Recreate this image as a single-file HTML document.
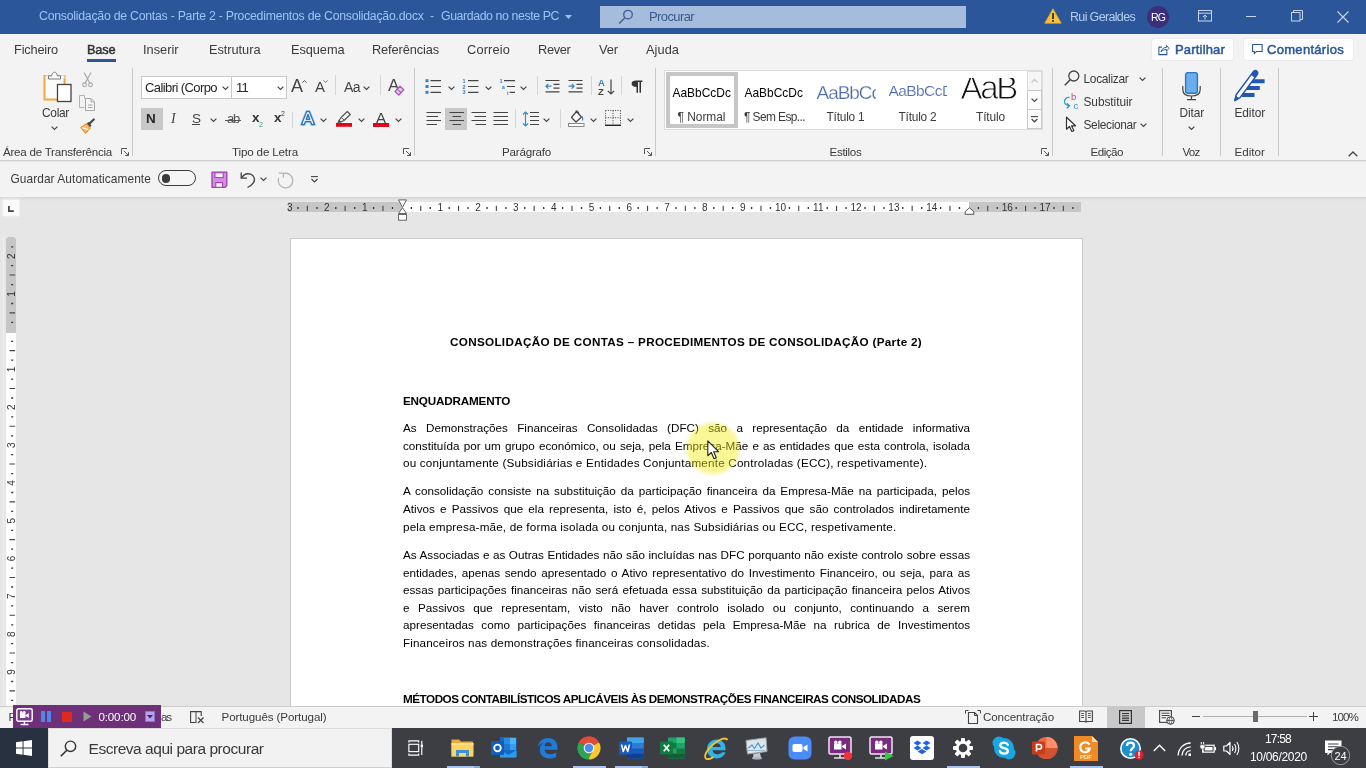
<!DOCTYPE html>
<html lang="pt"><head>
<meta charset="utf-8">
<title>Word</title>
<style>
*{box-sizing:border-box;margin:0;padding:0}
html,body{width:1366px;height:768px;overflow:hidden;background:#e6e6e6;font-family:"Liberation Sans",sans-serif;color:#444}
body{will-change:transform;position:relative}
.t{position:absolute;white-space:nowrap;line-height:1;color:#3b3b3b;transform-origin:0 0;font-size:12px}
.b{font-weight:bold}
svg{position:absolute;overflow:visible}
.bx{position:absolute}
/* title bar */
#titlebar{position:absolute;left:0;top:0;width:1366px;height:34px;background:#2b579a}
#search{position:absolute;left:600px;top:6px;width:366px;height:22px;background:#a6bcdc}
/* ribbon */
#tabs{position:absolute;left:0;top:34px;width:1366px;height:29px;background:#f3f3f3}
#ribbon{position:absolute;left:0;top:63px;width:1366px;height:98px;background:#f3f3f3;border-bottom:1px solid #d0d0d0}
#qat{position:absolute;left:0;top:161px;width:1366px;height:36px;background:#f3f3f3;border-top:1px solid #e4e4e4}
.sep{position:absolute;width:1px;background:#c9c9c9}
.sep2{position:absolute;width:1px;background:#d6d6d6}
/* doc */
#docarea{position:absolute;left:0;top:197px;width:1366px;height:509px;background:#e6e6e6}
#page{position:absolute;left:291px;top:239px;width:791px;height:467px;background:#fff;box-shadow:0 0 0 1px #cbcbcb}
.ln{position:absolute;left:403px;width:567px;font-size:11.700px;line-height:18px;height:18px;color:#000;text-align:justify;text-align-last:justify;white-space:nowrap}
.lb{position:absolute;left:403px;font-size:11.700px;line-height:18px;height:18px;color:#000;white-space:nowrap;transform-origin:0 0}
/* status */
#status{position:absolute;left:0;top:706px;width:1366px;height:22px;background:#f3f3f3;border-top:1px solid #cdcdcd}
/* taskbar */
#taskbar{position:absolute;left:0;top:728px;width:1366px;height:40px;background:#3c3e44}
#start{position:absolute;left:0;top:0;width:48px;height:40px;background:#273140}
#tsearch{position:absolute;left:48px;top:0;width:344px;height:40px;background:#f2f2f2;border:1px solid #dcdcdc;border-bottom-color:#cfcfcf}
.ul{position:absolute;top:38px;height:2px;background:#a9c3ee}
</style>
</head>
<body>
<!-- ================= TITLE BAR ================= -->
<div id="titlebar">
  <div class="t" style="left: 39px; top: 9.5px; font-size: 12.3px; color: rgb(156, 195, 246); letter-spacing: -0.25px;">Consolidação de Contas - Parte 2 - Procedimentos de Consolidação.docx</div>
  <div class="t" style="left:430px;top:9.500px;font-size:12.300px;color:#9cc3f6">-</div>
  <div class="t" style="left: 441px; top: 9.5px; font-size: 12.3px; color: rgb(156, 195, 246); letter-spacing: -0.39px;">Guardado no neste PC</div>
  <svg style="left:565px;top:15px" width="8" height="5" viewBox="0 0 8 5"><path d="M0 0h7l-3.5 4z" fill="#9cc3f6"></path></svg>
  <div id="search"></div>
  <svg style="left:618px;top:9px" width="16" height="16" viewBox="0 0 16 16"><circle cx="10" cy="5.6" r="4.3" fill="none" stroke="#3f5f93" stroke-width="1.3"></circle><path d="M6.9 8.7L1.2 14.4" stroke="#3f5f93" stroke-width="1.4"></path></svg>
  <div class="t" style="left: 649px; top: 10px; font-size: 13px; color: rgb(58, 90, 142); letter-spacing: -0.61px;">Procurar</div>
  <!-- warning -->
  <svg style="left:1044px;top:8px" width="18" height="16" viewBox="0 0 18 16"><path d="M9 .8L17.2 15.2H.8z" fill="#f9c23c" stroke="#e9a321" stroke-width=".8" stroke-linejoin="round"></path><rect x="8.1" y="5" width="1.9" height="6" fill="#3a3a3a"></rect><rect x="8.1" y="12" width="1.9" height="1.9" fill="#3a3a3a"></rect></svg>
  <div class="t" style="left: 1070px; top: 11px; font-size: 12.5px; color: rgb(180, 205, 240); letter-spacing: -0.66px;">Rui Geraldes</div>
  <div class="bx" style="left:1147px;top:6px;width:22px;height:22px;border-radius:11px;background:#3d2e7c"></div>
  <div class="t" style="left: 1151px; top: 12px; font-size: 10.5px; color: rgb(255, 255, 255); letter-spacing: -0.88px;">RG</div>
  <!-- ribbon display -->
  <svg style="left:1198px;top:10px" width="14" height="12" viewBox="0 0 14 12"><rect x=".5" y=".5" width="13" height="10.5" fill="none" stroke="#c7d6ee" stroke-width="1"></rect><path d="M.5 3.2h13" stroke="#c7d6ee"></path><path d="M7 9.5V5.2M5 7l2-2 2 2" fill="none" stroke="#c7d6ee" stroke-width="1"></path></svg>
  <!-- min -->
  <div class="bx" style="left:1246px;top:16px;width:10px;height:1px;background:#c7d6ee"></div>
  <!-- restore -->
  <svg style="left:1291px;top:10px" width="12" height="12" viewBox="0 0 12 12"><rect x=".5" y="2.5" width="8.5" height="8.5" fill="none" stroke="#c7d6ee"></rect><path d="M2.5 2.5V.5h9v9h-2.4" fill="none" stroke="#c7d6ee"></path></svg>
  <!-- close -->
  <svg style="left:1337px;top:11px" width="12" height="12" viewBox="0 0 12 12"><path d="M.5.5l11 11M11.500.5l-11 11" stroke="#c7d6ee" stroke-width="1.1"></path></svg>
</div>

<!-- ================= TABS ================= -->
<div id="tabs">
  <div class="t" style="left: 14px; top: 10px; font-size: 12.8px; letter-spacing: -0.19px;">Ficheiro</div>
  <div class="t" style="left: 87px; top: 10px; font-size: 12.8px; color: rgb(51, 51, 51); -webkit-text-stroke: 0.45px rgb(51, 51, 51); letter-spacing: -0.17px;">Base</div>
  <div class="bx" style="left:87px;top:25px;width:29px;height:3px;background:#2b579a"></div>
  <div class="t" style="left: 143px; top: 10px; font-size: 12.8px; letter-spacing: -0.01px;">Inserir</div>
  <div class="t" style="left: 209px; top: 10px; font-size: 12.8px; letter-spacing: -0.05px;">Estrutura</div>
  <div class="t" style="left: 291px; top: 10px; font-size: 12.8px; letter-spacing: -0.08px;">Esquema</div>
  <div class="t" style="left: 372px; top: 10px; font-size: 12.8px; letter-spacing: -0.12px;">Referências</div>
  <div class="t" style="left: 467px; top: 10px; font-size: 12.8px; letter-spacing: 0.15px;">Correio</div>
  <div class="t" style="left: 538px; top: 10px; font-size: 12.8px; letter-spacing: -0.33px;">Rever</div>
  <div class="t" style="left: 599px; top: 10px; font-size: 12.8px; letter-spacing: -0.07px;">Ver</div>
  <div class="t" style="left: 646px; top: 10px; font-size: 12.8px; letter-spacing: 0.05px;">Ajuda</div>
  <!-- Partilhar / Comentarios -->
  <div class="bx" style="left:1152px;top:5px;width:81px;height:21px;background:#fff;border-radius:3px;box-shadow:0 0 0 1px #ececec"></div>
  <svg style="left:1158px;top:9.500px" width="11.500" height="11.500" viewBox="0 0 13 13"><path d="M4.5 3.500H1v8.500h9V8.500" fill="none" stroke="#2b579a" stroke-width="1.2"></path><path d="M3.500 9c.5-3 2.500-5 6-5.200V1.500L12.500 5 9.500 8.200V6.200C7 6.200 5 7 3.500 9z" fill="none" stroke="#2b579a" stroke-width="1.100" stroke-linejoin="round"></path></svg>
  <div class="t" style="left: 1175px; top: 9px; font-size: 13px; color: rgb(43, 87, 154); -webkit-text-stroke: 0.5px rgb(43, 87, 154); letter-spacing: 0.18px;">Partilhar</div>
  <div class="bx" style="left:1244px;top:5px;width:109px;height:21px;background:#fff;border-radius:3px;box-shadow:0 0 0 1px #ececec"></div>
  <svg style="left:1252px;top:10px" width="11" height="11" viewBox="0 0 12 12"><path d="M.6.6h10.500v7.500H5L2.500 10.600V8.100H.6z" fill="none" stroke="#2b579a" stroke-width="1.200" stroke-linejoin="round"></path></svg>
  <div class="t" style="left: 1267px; top: 9px; font-size: 13px; color: rgb(43, 87, 154); -webkit-text-stroke: 0.5px rgb(43, 87, 154); letter-spacing: 0.3px;">Comentários</div>
</div>

<!-- ================= RIBBON ================= -->
<div id="ribbon"></div>
<svg width="0" height="0" style="left:-10px;top:-10px">
  <defs>
    <path id="chv" d="M.6.6L3.500 3.400 6.400.6" fill="none" stroke="#444" stroke-width="1.200"></path>
    <g id="dl" fill="none" stroke="#555" stroke-width="1"><path d="M.5 6V.5H6"></path><path d="M3 3l4.500 4.500M7.500 4.200v3.300H4.200"></path></g>
  </defs>
</svg>

<!-- Clipboard group -->
<svg style="left:43px;top:71px" width="30" height="32" viewBox="0 0 30 32">
  <rect x="1.500" y="5" width="20" height="23.500" fill="#fbfbfb" stroke="#f0a741" stroke-width="2"></rect>
  <rect x="2.500" y="4.500" width="19" height="3" fill="#f3f3f3"></rect>
  <path d="M5.500 8V4.800h3.200C9 2.500 10 1.200 11.500 1.200S14 2.500 14.300 4.800h3.200V8z" fill="#fafafa" stroke="#7a7a7a" stroke-width="1"></path>
  <rect x="14.500" y="13.500" width="13.500" height="17" fill="#fff" stroke="#444" stroke-width="1.300"></rect>
</svg>
<div class="t" style="left: 42px; top: 107.5px; font-size: 11.9px; letter-spacing: -0.28px;">Colar</div>
<svg style="left:51px;top:126px" width="7" height="4" viewBox="0 0 7 4"><use href="#chv"></use></svg>
<!-- scissors (grey) -->
<svg style="left:82px;top:72px" width="11" height="16" viewBox="0 0 11 16"><path d="M2 .5L7.800 11M9 .5L3.200 11" stroke="#a8a8a8" stroke-width="1.200" fill="none"></path><circle cx="2.500" cy="12.800" r="1.900" fill="none" stroke="#a8a8a8" stroke-width="1.100"></circle><circle cx="8.500" cy="12.800" r="1.900" fill="none" stroke="#a8a8a8" stroke-width="1.100"></circle></svg>
<!-- copy (grey) -->
<svg style="left:79px;top:95px" width="17" height="17" viewBox="0 0 17 17"><path d="M5.500 3.500V.5h-5v12h5" fill="none" stroke="#b3b3b3"></path><path d="M6.500 3.500h5.500l3.500 3.500v8.500h-9z" fill="#f7f7f7" stroke="#a6a6a6"></path><path d="M12 3.500v3.500h3.500M9 10h4.500M9 12.500h4.500" fill="none" stroke="#a6a6a6"></path></svg>
<!-- format painter -->
<svg style="left:80px;top:118px" width="16" height="16" viewBox="0 0 16 16"><path d="M1 9.500l5.500-3.700 3.700 4.200-4.700 5z" fill="#f6c36a" stroke="#e8952f" stroke-width="1.200" stroke-linejoin="round"></path><path d="M2 9.800l6.500 1.700" stroke="#fff" stroke-width="1"></path><path d="M6.800 5.300l1.700-1.200 3 3.500-1.500 1.400z" fill="#444"></path><path d="M9.800 5.200L13.800 1.500" stroke="#444" stroke-width="2.200" stroke-linecap="round"></path></svg>
<div class="t" style="left: 3px; top: 146.4px; font-size: 11.6px; letter-spacing: -0.24px;">Área de Transferência</div>
<svg style="left:121px;top:148px" width="8" height="8" viewBox="0 0 8 8"><use href="#dl"></use></svg>
<div class="sep" style="left:132px;top:68px;height:88px"></div>

<!-- Font group -->
<div class="bx" style="left:141px;top:76px;width:91px;height:23px;background:#fff;border:1px solid #c8c8c8"></div>
<div class="bx" style="left:231px;top:76px;width:56px;height:23px;background:#fff;border:1px solid #c8c8c8"></div>
<div class="t" style="left: 145px; top: 81px; font-size: 13px; color: rgb(38, 38, 38); letter-spacing: -0.59px;">Calibri (Corpo</div>
<svg style="left:222px;top:86px" width="7" height="4" viewBox="0 0 7 4"><use href="#chv"></use></svg>
<div class="t" style="left: 236px; top: 81px; font-size: 13px; color: rgb(38, 38, 38); letter-spacing: -0.75px;">11</div>
<svg style="left:277px;top:86px" width="7" height="4" viewBox="0 0 7 4"><use href="#chv"></use></svg>
<!-- grow / shrink -->
<div class="t" style="left: 291px; top: 77px; font-size: 18px; color: rgb(68, 68, 68); letter-spacing: -0.52px;">A</div>
<svg style="left:302px;top:80px" width="5" height="3" viewBox="0 0 5 3"><path d="M.4 2.600L2.500.600 4.600 2.600" fill="none" stroke="#555" stroke-width="1"></path></svg>
<div class="t" style="left: 315px; top: 79px; font-size: 15px; color: rgb(68, 68, 68); letter-spacing: -1.02px;">A</div>
<svg style="left:323px;top:80px" width="5" height="3" viewBox="0 0 5 3"><path d="M.4.400L2.500 2.400 4.600.400" fill="none" stroke="#4a7ab5" stroke-width="1"></path></svg>
<div class="sep2" style="left:335px;top:75px;height:20px"></div>
<div class="t" style="left: 344px; top: 80px; font-size: 14px; color: rgb(68, 68, 68); letter-spacing: -0.56px;">Aa</div>
<svg style="left:363px;top:86px" width="7" height="4" viewBox="0 0 7 4"><use href="#chv"></use></svg>
<div class="sep2" style="left:380px;top:75px;height:20px"></div>
<!-- clear formatting -->
<div class="t" style="left: 388px; top: 77px; font-size: 17px; color: rgb(68, 68, 68); letter-spacing: -1.34px;">A</div>
<svg style="left:394px;top:85px" width="11" height="11" viewBox="0 0 11 11"><path d="M1 6.500L6 1.200 9.800 4.700 4.800 10z" fill="#e9c9ef" stroke="#a55cb5" stroke-width="1.300" stroke-linejoin="round"></path><path d="M3.300 4.200l3.700 3.500" stroke="#a55cb5" stroke-width="1.100"></path></svg>

<!-- row 2 -->
<div class="bx" style="left:141px;top:108px;width:22px;height:22px;background:#c8c8c8"></div>
<div class="t b" style="left: 146px; top: 112px; font-size: 13.5px; color: rgb(38, 38, 38); letter-spacing: 0.25px;">N</div>
<div class="t" style="left: 171px; top: 112px; font-size: 14px; font-family: &quot;Liberation Serif&quot;, serif; font-style: italic; color: rgb(68, 68, 68); letter-spacing: 1.33px;">I</div>
<div class="t" style="left: 192px; top: 112px; font-size: 13.5px; color: rgb(68, 68, 68); letter-spacing: -1.02px;">S</div>
<div class="bx" style="left:192px;top:124px;width:8px;height:1px;background:#444"></div>
<svg style="left:210px;top:118px" width="7" height="4" viewBox="0 0 7 4"><use href="#chv"></use></svg>
<div class="t" style="left: 227px; top: 112px; font-size: 13px; color: rgb(85, 85, 85); letter-spacing: -1.23px;">ab</div>
<div class="bx" style="left:225px;top:120px;width:16px;height:1px;background:#555"></div>
<div class="t b" style="left: 252px; top: 111px; font-size: 13.5px; color: rgb(51, 51, 51); letter-spacing: -0.52px;">x</div>
<div class="t" style="left: 259px; top: 121px; font-size: 7px; color: rgb(42, 157, 143); letter-spacing: -0.41px;">2</div>
<div class="t b" style="left: 274px; top: 111px; font-size: 13.5px; color: rgb(51, 51, 51); letter-spacing: -0.52px;">x</div>
<div class="t" style="left: 281px; top: 110px; font-size: 7px; color: rgb(68, 68, 68); letter-spacing: -0.41px;">2</div>
<div class="sep2" style="left:292px;top:112px;height:16px"></div>
<!-- text effects A -->
<svg style="left:300px;top:110px" width="16" height="16" viewBox="0 0 16 16"><path d="M1.500 14.500L6.700 1.500h2.600l5.200 13h-2.800l-1.100-3H5.400l-1.100 3z M6.200 9.300h3.600L8 4.300z" fill="#fff" stroke="#a9d3f5" stroke-width="3" stroke-linejoin="round" fill-rule="evenodd"></path><path d="M1.500 14.500L6.700 1.500h2.600l5.200 13h-2.800l-1.100-3H5.400l-1.100 3z M6.200 9.300h3.600L8 4.300z" fill="#fff" stroke="#2e75b6" stroke-width="1.300" stroke-linejoin="round" fill-rule="evenodd"></path></svg>
<svg style="left:320px;top:118px" width="7" height="4" viewBox="0 0 7 4"><use href="#chv"></use></svg>
<!-- highlighter -->
<svg style="left:336px;top:110px" width="17" height="17" viewBox="0 0 17 17"><path d="M3 10.500l2.300-3.200L11.300 1.500l3 3-6 5.800L5 12z" fill="#f3f3f3" stroke="#555" stroke-width="1.200" stroke-linejoin="round"></path><path d="M3 10.500L5 12l-3.200.600z M5.300 7.300L8.300 10.300" fill="#555" stroke="#555" stroke-width="1"></path><rect x="0" y="13" width="16" height="3.800" fill="#e3061a"></rect></svg>
<svg style="left:358px;top:118px" width="7" height="4" viewBox="0 0 7 4"><use href="#chv"></use></svg>
<!-- font colour -->
<div class="t" style="left: 376px; top: 110px; font-size: 15px; color: rgb(68, 68, 68); letter-spacing: -0.02px;">A</div>
<div class="bx" style="left:373px;top:123px;width:16px;height:4px;background:#e3061a"></div>
<svg style="left:395px;top:118px" width="7" height="4" viewBox="0 0 7 4"><use href="#chv"></use></svg>
<div class="t" style="left: 232px; top: 146.4px; font-size: 11.6px; letter-spacing: -0.15px;">Tipo de Letra</div>
<svg style="left:403px;top:148px" width="8" height="8" viewBox="0 0 8 8"><use href="#dl"></use></svg>
<div class="sep" style="left:414px;top:68px;height:88px"></div>

<!-- Paragraph group -->
<!-- bullets -->
<svg style="left:425px;top:78px" width="17" height="16" viewBox="0 0 17 16"><g fill="#3a80c3"><rect x=".5" y="1.200" width="3" height="3"></rect><rect x=".5" y="7" width="3" height="3"></rect><rect x=".5" y="12.800" width="3" height="3"></rect></g><path d="M5.500 2.700H16M5.500 8.500H16M5.500 14.300H16" stroke="#444" stroke-width="1.200"></path></svg>
<svg style="left:448px;top:86px" width="7" height="4" viewBox="0 0 7 4"><use href="#chv"></use></svg>
<!-- numbering -->
<svg style="left:462px;top:78px" width="17" height="16" viewBox="0 0 17 16"><g fill="#3a80c3" font-family="Liberation Sans" font-size="5.500" font-weight="bold"><text x=".5" y="4.700">1</text><text x=".5" y="10.500">2</text><text x=".5" y="16.200">3</text></g><path d="M6 2.700H16.500M6 8.500H16.500M6 14.300H16.500" stroke="#444" stroke-width="1.200"></path></svg>
<svg style="left:485px;top:86px" width="7" height="4" viewBox="0 0 7 4"><use href="#chv"></use></svg>
<!-- multilevel -->
<svg style="left:499px;top:78px" width="17" height="17" viewBox="0 0 17 17"><g fill="#3a80c3" font-family="Liberation Sans" font-size="5.500" font-weight="bold"><text x=".5" y="4.700">1</text><text x="2.800" y="10.700">a</text><text x="8" y="16.600">i</text></g><path d="M5 2.700H16M8 8.500H16M10.700 14.300H16" stroke="#444" stroke-width="1.200"></path></svg>
<svg style="left:520px;top:86px" width="7" height="4" viewBox="0 0 7 4"><use href="#chv"></use></svg>
<div class="sep2" style="left:537px;top:76px;height:19px"></div>
<!-- decrease indent -->
<svg style="left:545px;top:79px" width="15" height="14" viewBox="0 0 15 14"><path d="M.5 1.500H14.500M8.500 5.300H14.500M8.500 9.100H14.500M.5 12.900H14.500" stroke="#444" stroke-width="1.200"></path><path d="M6.500 7.200H1M3.300 4.800L.9 7.200l2.400 2.400" fill="none" stroke="#3a80c3" stroke-width="1.200"></path></svg>
<!-- increase indent -->
<svg style="left:568px;top:79px" width="15" height="14" viewBox="0 0 15 14"><path d="M.5 1.500H14.500M8.500 5.300H14.500M8.500 9.100H14.500M.5 12.900H14.500" stroke="#444" stroke-width="1.200"></path><path d="M.500 7.200H6M3.700 4.800l2.400 2.400-2.400 2.400" fill="none" stroke="#3a80c3" stroke-width="1.200"></path></svg>
<div class="sep2" style="left:591px;top:76px;height:19px"></div>
<!-- sort -->
<div class="t b" style="left: 598px; top: 78px; font-size: 9.5px; color: rgb(58, 128, 195); letter-spacing: -0.38px;">A</div>
<div class="t b" style="left: 598px; top: 87px; font-size: 9.5px; color: rgb(68, 68, 68); letter-spacing: 0.69px;">Z</div>
<svg style="left:607px;top:79px" width="8" height="16" viewBox="0 0 8 16"><path d="M4 .5V15M.8 11.800L4 15l3.200-3.200" fill="none" stroke="#444" stroke-width="1.200"></path></svg>
<div class="sep2" style="left:621px;top:76px;height:19px"></div>
<!-- pilcrow -->
<svg style="left:631px;top:80px" width="12" height="13" viewBox="0 0 12 13"><path d="M5.500 6.800C2.300 6.800.6 5.600.6 3.700S2.300.6 5.500.6H11.400V2H10V12.800H8.500V2H7V12.800H5.500z" fill="#333"></path></svg>

<!-- row 2: alignments -->
<svg style="left:426px;top:111px" width="16" height="15" viewBox="0 0 16 15"><path d="M.5 1.500H15M.5 5.500H12M.5 9.500H15M.5 13.500H11" stroke="#444" stroke-width="1.200"></path></svg>
<div class="bx" style="left:445px;top:108px;width:22px;height:22px;background:#c8c8c8"></div>
<svg style="left:449px;top:111px" width="16" height="15" viewBox="0 0 16 15"><path d="M.5 1.500H15M3.500 5.500H12M.5 9.500H15M3.500 13.500H12" stroke="#444" stroke-width="1.200"></path></svg>
<svg style="left:471px;top:111px" width="16" height="15" viewBox="0 0 16 15"><path d="M.5 1.500H15M3.500 5.500H15M.5 9.500H15M4.500 13.500H15" stroke="#444" stroke-width="1.200"></path></svg>
<svg style="left:493px;top:111px" width="16" height="15" viewBox="0 0 16 15"><path d="M.5 1.500H15M.5 5.500H15M.5 9.500H15M.5 13.500H15" stroke="#444" stroke-width="1.200"></path></svg>
<div class="sep2" style="left:515px;top:109px;height:19px"></div>
<!-- line spacing -->
<svg style="left:522px;top:111px" width="18" height="16" viewBox="0 0 18 16"><path d="M3.500 1V15M1 3.500L3.500 1 6 3.500M1 12.500L3.500 15 6 12.500" fill="none" stroke="#2f8fd0" stroke-width="1.200"></path><path d="M8 1.500H17M8 5.500H17M8 9.500H17M8 13.500H17" stroke="#444" stroke-width="1.200"></path></svg>
<svg style="left:543px;top:118px" width="7" height="4" viewBox="0 0 7 4"><use href="#chv"></use></svg>
<div class="sep2" style="left:560px;top:109px;height:19px"></div>
<!-- shading -->
<svg style="left:568px;top:110px" width="17" height="17" viewBox="0 0 17 17"><path d="M3.500 7.500L8.500 1.500l5 5.500-5.500 5z" fill="#fdfdfd" stroke="#444" stroke-width="1.200" stroke-linejoin="round"></path><path d="M7.500 1C9 .3 10.500 1.200 10.800 3.500" fill="none" stroke="#444" stroke-width="1"></path><path d="M13.800 6.500c1 1.300 1.500 2.600.8 4" fill="none" stroke="#3a80c3" stroke-width="1.300"></path><rect x=".5" y="13.500" width="15.500" height="3" fill="#fff" stroke="#8a8a8a" stroke-width="1"></rect></svg>
<svg style="left:590px;top:118px" width="7" height="4" viewBox="0 0 7 4"><use href="#chv"></use></svg>
<!-- borders -->
<svg style="left:605px;top:110px" width="16" height="16" viewBox="0 0 16 16"><path d="M.5.500H15.500M.5.500V15M15.500.500V15M8 .500V15M.5 7.700H15.500" fill="none" stroke="#444" stroke-width="1" stroke-dasharray="1 1.400"></path><path d="M0 15.300H16" stroke="#222" stroke-width="1.400"></path></svg>
<svg style="left:627px;top:118px" width="7" height="4" viewBox="0 0 7 4"><use href="#chv"></use></svg>
<div class="t" style="left: 502px; top: 146.4px; font-size: 11.6px; letter-spacing: -0.21px;">Parágrafo</div>
<svg style="left:644px;top:148px" width="8" height="8" viewBox="0 0 8 8"><use href="#dl"></use></svg>
<div class="sep" style="left:655px;top:68px;height:88px"></div>

<!-- Styles gallery -->
<div class="bx" style="left:665px;top:71px;width:377px;height:58px;background:#fff;box-shadow:0 0 0 1px #dcdcdc"></div>
<div class="bx" style="left:666px;top:72px;width:72px;height:56px;border:4px solid #c6c6c6;background:#fff"></div>
<div class="t" style="left: 672.5px; top: 87.5px; font-size: 11.9px; color: rgb(0, 0, 0); letter-spacing: 0.04px;">AaBbCcDc</div>
<div class="t" style="left: 677.5px; top: 111.5px; font-size: 11.9px; letter-spacing: 0px;">¶ Normal</div>
<div class="t" style="left: 744.5px; top: 87.5px; font-size: 11.9px; color: rgb(0, 0, 0); letter-spacing: 0.04px;">AaBbCcDc</div>
<div class="t" style="left: 744px; top: 111.5px; font-size: 11.9px; letter-spacing: -0.57px;">¶ Sem Esp...</div>
<div class="bx" style="left:816.500px;top:80px;width:59px;height:24px;overflow:hidden"><div class="t" style="left: 0px; top: 4px; font-size: 18.9px; color: rgb(74, 107, 171); -webkit-text-stroke: 0.25px rgb(255, 255, 255); letter-spacing: -0.97px;">AaBbCc</div></div>
<div class="t" style="left: 826.5px; top: 111.5px; font-size: 11.9px; letter-spacing: -0.21px;">Título 1</div>
<div class="bx" style="left:888.500px;top:80px;width:58.500px;height:24px;overflow:hidden"><div class="t" style="left: 0px; top: 3.3px; font-size: 15.5px; color: rgb(74, 107, 171); -webkit-text-stroke: 0.15px rgb(255, 255, 255); letter-spacing: -0.58px;">AaBbCcD</div></div>
<div class="t" style="left: 898.5px; top: 111.5px; font-size: 11.9px; letter-spacing: -0.21px;">Título 2</div>
<div class="bx" style="left:955px;top:78px;width:66px;height:24px;overflow:hidden"><div class="t" style="left: 5.5px; top: -7px; font-size: 33px; color: rgb(17, 17, 17); -webkit-text-stroke: 0.9px rgb(255, 255, 255); letter-spacing: -2.29px;">AaB</div></div>
<div class="t" style="left: 976px; top: 111.5px; font-size: 11.9px; letter-spacing: -0.13px;">Título</div>
<!-- scroll buttons -->
<div class="bx" style="left:1027px;top:71px;width:15px;height:20px;background:#f6f6f6;border:1px solid #dcdcdc"></div>
<div class="bx" style="left:1027px;top:90px;width:15px;height:20px;background:#fdfdfd;border:1px solid #c8c8c8"></div>
<div class="bx" style="left:1027px;top:109px;width:15px;height:20px;background:#fdfdfd;border:1px solid #c8c8c8"></div>
<svg style="left:1031px;top:79px" width="7" height="4" viewBox="0 0 7 4"><path d="M.6 3.400L3.500.6 6.400 3.400" fill="none" stroke="#c0c0c0" stroke-width="1.200"></path></svg>
<svg style="left:1031px;top:98px" width="7" height="4" viewBox="0 0 7 4"><use href="#chv"></use></svg>
<svg style="left:1031px;top:116px" width="7" height="7" viewBox="0 0 7 7"><path d="M0 .6H7" stroke="#444" stroke-width="1.100"></path><path d="M.6 3L3.500 5.800 6.400 3" fill="none" stroke="#444" stroke-width="1.200"></path></svg>
<div class="t" style="left: 829.5px; top: 146.4px; font-size: 11.6px; letter-spacing: -0.31px;">Estilos</div>
<svg style="left:1041px;top:148px" width="8" height="8" viewBox="0 0 8 8"><use href="#dl"></use></svg>
<div class="sep" style="left:1052px;top:68px;height:88px"></div>

<!-- Editing group -->
<svg style="left:1064px;top:70px" width="16" height="16" viewBox="0 0 16 16"><circle cx="9.800" cy="6" r="5" fill="none" stroke="#444" stroke-width="1.300"></circle><path d="M6.200 9.700L.8 15.200" stroke="#444" stroke-width="1.500"></path></svg>
<div class="t" style="left: 1083.5px; top: 73.5px; font-size: 11.9px; letter-spacing: -0.29px;">Localizar</div>
<svg style="left:1139px;top:77px" width="7" height="4" viewBox="0 0 7 4"><use href="#chv"></use></svg>
<!-- replace icon -->
<svg style="left:1063px;top:92px" width="17" height="18" viewBox="0 0 17 18"><text x="8" y="7.500" font-family="Liberation Sans" font-size="9.500" fill="#c2458f">b</text><text x="10.500" y="16.500" font-family="Liberation Sans" font-size="9.500" fill="#2f8fd0">c</text><path d="M6.500 5.500C3 5.200 1.200 7.500 1.500 10c.3 2.200 2 3.500 4.500 3.700" fill="none" stroke="#3aa0b8" stroke-width="1.300"></path><path d="M3.800 11.300L6.500 13.800 3.800 16.300" fill="none" stroke="#2f8fd0" stroke-width="1.300"></path></svg>
<div class="t" style="left: 1083.5px; top: 96.5px; font-size: 11.9px; letter-spacing: -0.06px;">Substituir</div>
<!-- select cursor -->
<svg style="left:1065px;top:116px" width="12" height="17" viewBox="0 0 12 17"><path d="M1.500 1.200V13.200L4.500 10.500 6.800 15.500 8.800 14.600 6.500 9.800H10.500z" fill="#fff" stroke="#333" stroke-width="1.200" stroke-linejoin="round"></path></svg>
<div class="t" style="left: 1083.5px; top: 119.5px; font-size: 11.9px; letter-spacing: -0.32px;">Selecionar</div>
<svg style="left:1140px;top:123px" width="7" height="4" viewBox="0 0 7 4"><use href="#chv"></use></svg>
<div class="t" style="left: 1090.5px; top: 146.4px; font-size: 11.6px; letter-spacing: -0.49px;">Edição</div>
<div class="sep" style="left:1162px;top:68px;height:88px"></div>

<!-- Voice -->
<svg style="left:1181px;top:71px" width="21" height="30" viewBox="0 0 21 30"><rect x="4.600" y="1.600" width="11.800" height="20.600" rx="2.300" fill="#6aaeed" stroke="#2a77c0" stroke-width="1.400"></rect><path d="M1.800 15V18.500c0 4.500 3.700 6.500 8.700 6.500s8.700-2 8.700-6.500V15" fill="none" stroke="#444" stroke-width="1.200"></path><path d="M10.500 25V28.500M6 28.700H15" stroke="#444" stroke-width="1.200"></path></svg>
<div class="t" style="left: 1179.5px; top: 107.5px; font-size: 11.9px; letter-spacing: -0.12px;">Ditar</div>
<svg style="left:1188px;top:126px" width="7" height="4" viewBox="0 0 7 4"><use href="#chv"></use></svg>
<div class="t" style="left: 1182.5px; top: 146.4px; font-size: 11.6px; letter-spacing: -0.78px;">Voz</div>
<div class="sep" style="left:1220px;top:68px;height:88px"></div>

<!-- Editor -->
<svg style="left:1234px;top:70px" width="32" height="32" viewBox="0 0 32 32"><path d="M17.500 11.300H30.600M13 18H25.800M8 25H20.500" stroke="#2257b5" stroke-width="4"></path><path d="M.8 30.600L2.200 24.800 19.600 1.400C20.400.400 21.700.300 22.600 1S23.900 3.200 23.400 4.200L6 27.600z" fill="#fff" stroke="#2257b5" stroke-width="1.500" stroke-linejoin="round"></path><path d="M17.200 4.600L19.600 1.400C20.400.400 21.700.300 22.600 1S23.900 3.200 23.400 4.200L21 7.400z" fill="#2257b5" stroke="#2257b5" stroke-width="1"></path><path d="M.8 30.600L1.900 26.300 4.700 28.400z" fill="#2257b5" stroke="#2257b5" stroke-width="1" stroke-linejoin="round"></path></svg>
<div class="t" style="left: 1234.5px; top: 107.5px; font-size: 11.9px; letter-spacing: -0.09px;">Editor</div>
<div class="t" style="left: 1234.5px; top: 146.4px; font-size: 11.6px; letter-spacing: 0.03px;">Editor</div>
<div class="sep" style="left:1278px;top:68px;height:88px"></div>
<svg style="left:1348px;top:151px" width="10" height="6" viewBox="0 0 10 6"><path d="M.7 5.200L5 1 9.300 5.200" fill="none" stroke="#444" stroke-width="1.300"></path></svg>

<!-- ================= QAT ================= -->
<div id="qat"></div>
<div class="t" style="left: 10.5px; top: 174px; font-size: 11.9px; letter-spacing: 0.07px;">Guardar Automaticamente</div>
<div class="bx" style="left:158px;top:170px;width:38px;height:16px;border:1.400px solid #3b3b3b;border-radius:8px;background:#f5f5f5"></div>
<div class="bx" style="left:161.500px;top:174px;width:8.600px;height:8.600px;border-radius:5px;background:#3b3b3b"></div>
<!-- save -->
<svg style="left:211px;top:171px" width="17" height="17" viewBox="0 0 17 17"><path d="M1 1.200H15.800V14.500L14 16.300H1z" fill="#d88de2" stroke="#9d3fb3" stroke-width="1.300" stroke-linejoin="round"></path><rect x="4" y="1.800" width="8.200" height="4.800" fill="#fbf3fc" stroke="#9d3fb3" stroke-width="1"></rect><rect x="4.800" y="11.500" width="6.800" height="4.800" fill="#fbf3fc" stroke="#9d3fb3" stroke-width="1"></rect></svg>
<!-- undo -->
<svg style="left:240px;top:171px" width="16" height="17" viewBox="0 0 16 17"><path d="M1.200 1.500V7.200H7" fill="none" stroke="#444" stroke-width="1.300"></path><path d="M1.500 7C3.500 3.800 7 2 10.500 3.200c3.800 1.400 5 5.500 3 8.500-1 1.600-3 3.300-6 4.800" fill="none" stroke="#444" stroke-width="1.300"></path></svg>
<svg style="left:260px;top:177px" width="7" height="4" viewBox="0 0 7 4"><use href="#chv"></use></svg>
<!-- redo (disabled) -->
<svg style="left:277px;top:171px" width="17" height="18" viewBox="0 0 17 18"><path d="M6.400 2.600A7.300 7.300 0 1 1 1.700 7" fill="none" stroke="#b5b5b5" stroke-width="1.300"></path><path d="M1.800 2.200H6.400V6.800" fill="none" stroke="#b5b5b5" stroke-width="1.300"></path></svg>
<!-- customize -->
<svg style="left:310px;top:176px" width="9" height="7" viewBox="0 0 9 7"><path d="M1 .6H8" stroke="#444" stroke-width="1.100"></path><path d="M1.500 3L4.500 6 7.500 3" fill="none" stroke="#444" stroke-width="1.200"></path></svg>

<!-- ================= DOC AREA ================= -->
<div id="docarea"></div>
<div class="bx" style="left:0;top:197px;width:1366px;height:4px;background:linear-gradient(#d6d6d6,#e6e6e6)"></div>
<div class="bx" style="left:3px;top:200px;width:16px;height:16px;background:#fbfbfb;box-shadow:0 0 2px 1px #f1f1f1"></div>
<svg style="left:8px;top:206px" width="7" height="7" viewBox="0 0 7 7"><path d="M.9 0V5.100H5.800" fill="none" stroke="#444" stroke-width="1.700"></path></svg>
<div class="bx" style="left:288px;top:202px;width:793px;height:10px;background:#c6c6c6"></div>
<div class="bx" style="left:402px;top:202px;width:567px;height:10px;background:#fff"></div>
<svg style="left:0;top:202px" width="1366" height="10" viewBox="0 0 1366 10"><path d="M297.35 6H1081" stroke="#333" stroke-width="2" stroke-dasharray="1.300 17.600"></path><path d="M306.80 6.300H1081" stroke="#444" stroke-width="5.300" stroke-dasharray="1.100 36.700"></path><g font-family="Liberation Sans" font-size="10" fill="#333" text-anchor="middle"><text x="289.9" y="8.900">3</text><text x="326.9" y="8.900">2</text><text x="364.7" y="8.900">1</text><text x="440.3" y="8.900">1</text><text x="478.1" y="8.900">2</text><text x="515.9" y="8.900">3</text><text x="553.7" y="8.900">4</text><text x="591.5" y="8.900">5</text><text x="629.3" y="8.900">6</text><text x="667.1" y="8.900">7</text><text x="704.9" y="8.900">8</text><text x="742.7" y="8.900">9</text><text x="780.5" y="8.900">10</text><text x="818.3" y="8.900">11</text><text x="856.1" y="8.900">12</text><text x="893.9" y="8.900">13</text><text x="931.7" y="8.900">14</text><text x="1007.3" y="8.900">16</text><text x="1045.1" y="8.900">17</text></g></svg>
<svg style="left:398px;top:199px" width="9" height="22" viewBox="0 0 9 22"><path d="M.5.900H8.500L4.500 8.300z" fill="#fff" stroke="#666" stroke-width="1"></path><path d="M4.500 8.700L8.500 14.500H.5z" fill="#fff" stroke="#666" stroke-width="1"></path><rect x=".5" y="15.500" width="8" height="5.700" fill="#fff" stroke="#666" stroke-width="1"></rect></svg>
<svg style="left:964px;top:207px" width="11" height="8" viewBox="0 0 11 8"><path d="M5.500 .700L9.800 4.500V7.300H1.200V4.500z" fill="#fff" stroke="#555" stroke-width="1"></path></svg>
<div class="bx" style="left:3px;top:237px;width:1px;height:469px;background:#efefef"></div>
<div class="bx" style="left:6px;top:237px;width:10px;height:469px;background:#fff"></div>
<div class="bx" style="left:6px;top:237px;width:10px;height:96px;background:#c6c6c6;border-radius:2px 2px 0 0"></div>
<svg style="left:0;top:0" width="20" height="706" viewBox="0 0 20 706"><path d="M12.200 246.15V706" stroke="#333" stroke-width="2" stroke-dasharray="1.300 17.600"></path><path d="M12.300 274.50V706" stroke="#444" stroke-width="5.500" stroke-dasharray="1.100 36.700"></path><g font-family="Liberation Sans" font-size="10" fill="#333" text-anchor="middle"><text transform="translate(15.400 256.1) rotate(-90)" x="0" y="0">2</text><text transform="translate(15.400 293.9) rotate(-90)" x="0" y="0">1</text><text transform="translate(15.400 369.5) rotate(-90)" x="0" y="0">1</text><text transform="translate(15.400 407.3) rotate(-90)" x="0" y="0">2</text><text transform="translate(15.400 445.1) rotate(-90)" x="0" y="0">3</text><text transform="translate(15.400 482.9) rotate(-90)" x="0" y="0">4</text><text transform="translate(15.400 520.7) rotate(-90)" x="0" y="0">5</text><text transform="translate(15.400 558.5) rotate(-90)" x="0" y="0">6</text><text transform="translate(15.400 596.3) rotate(-90)" x="0" y="0">7</text><text transform="translate(15.400 634.1) rotate(-90)" x="0" y="0">8</text><text transform="translate(15.400 671.9) rotate(-90)" x="0" y="0">9</text></g></svg>
<div id="page"></div>
<!-- document text -->
<div class="lb b" style="left: 450px; top: 333.45px; letter-spacing: 0.31px;">CONSOLIDAÇÃO DE CONTAS – PROCEDIMENTOS DE CONSOLIDAÇÃO (Parte 2)</div>
<div class="lb b" style="top: 391.95px; letter-spacing: -0.19px;">ENQUADRAMENTO</div>
<div class="ln" style="top:418.900px">As Demonstrações Financeiras Consolidadas (DFC) são a representação da entidade informativa</div>
<div class="ln" style="top:437.35px">constituída por um grupo económico, ou seja, pela Empresa-Mãe e as entidades que esta controla, isolada</div>
<div class="lb" style="top: 454px; letter-spacing: 0.19px;">ou conjuntamente (Subsidiárias e Entidades Conjuntamente Controladas (ECC), respetivamente).</div>
<div class="ln" style="top:482.45px">A consolidação consiste na substituição da participação financeira da Empresa-Mãe na participada, pelos</div>
<div class="ln" style="top:500.05px">Ativos e Passivos que ela representa, isto é, pelos Ativos e Passivos que são controlados indiretamente</div>
<div class="lb" style="top: 517.65px; letter-spacing: 0.15px;">pela empresa-mãe, de forma isolada ou conjunta, nas Subsidiárias ou ECC, respetivamente.</div>
<div class="ln" style="top:545.95px">As Associadas e as Outras Entidades não são incluídas nas DFC porquanto não existe controlo sobre essas</div>
<div class="ln" style="top:563.55px">entidades, apenas sendo apresentado o Ativo representativo do Investimento Financeiro, ou seja, para as</div>
<div class="ln" style="top:581.15px">essas participações financeiras não será efetuada essa substituição da participação financeira pelos Ativos</div>
<div class="ln" style="top:598.75px">e Passivos que representam, visto não haver controlo isolado ou conjunto, continuando a serem</div>
<div class="ln" style="top:616.35px">apresentadas como participações financeiras detidas pela Empresa-Mãe na rubrica de Investimentos</div>
<div class="lb" style="top: 633.95px; letter-spacing: 0.12px;">Financeiros nas demonstrações financeiras consolidadas.</div>
<div class="lb b" style="top: 690.45px; letter-spacing: -0.48px;">MÉTODOS CONTABILÍSTICOS APLICÁVEIS ÀS DEMONSTRAÇÕES FINANCEIRAS CONSOLIDADAS</div>
<!-- cursor highlight -->
<div class="bx" style="left:684px;top:420px;width:58px;height:57px;border-radius:50%;background:radial-gradient(closest-side,rgba(240,236,15,.44) 0,rgba(240,236,15,.44) 80%,rgba(240,236,15,0) 100%)"></div>
<svg style="left:707px;top:440px" width="13" height="20" viewBox="0 0 13 20"><path d="M.8.800V15.800L4.300 12.500 7 18.800 9.300 17.800 6.700 11.700H11.500z" fill="#fff" stroke="#222" stroke-width="1.100" stroke-linejoin="round"></path></svg>

<!-- ================= STATUS BAR ================= -->
<div id="status"></div>
<div class="t" style="left:8.500px;top:711.400px;font-size:11.600px">P</div>
<div class="t" style="left: 161px; top: 711.4px; font-size: 11.6px; letter-spacing: -1.13px;">as</div>
<!-- proofing icon -->
<svg style="left:190px;top:711px" width="15" height="13" viewBox="0 0 15 13"><path d="M6 .600H.600V11.500H6.500M6 .600C7.500 .600 9.500.600 11.200.600V5" fill="none" stroke="#444" stroke-width="1.100"></path><path d="M6 .600V11" stroke="#444" stroke-width="1"></path><path d="M8 6.500l5.500 5.500M13.500 6.500L8 12" stroke="#444" stroke-width="1.200"></path></svg>
<div class="t" style="left: 221.5px; top: 711.4px; font-size: 11.6px; letter-spacing: -0.1px;">Português (Portugal)</div>
<!-- recorder purple bar -->
<div class="bx" style="left:13px;top:705px;width:148px;height:23px;background:#6d3079"></div>
<svg style="left:16px;top:708px" width="17" height="18" viewBox="0 0 17 18"><rect x=".8" y=".8" width="15.400" height="12.400" rx="1.500" fill="#7d3a8a" stroke="#fff" stroke-width="1.400"></rect><path d="M4 5h5.500v5H4zM9.800 7l3-2v5l-3-2z" fill="#fff"></path><circle cx="5.300" cy="4.200" r="1.300" fill="#fff"></circle><circle cx="8.300" cy="4.200" r="1.300" fill="#fff"></circle><path d="M8.500 13.500V16M4.500 16.500H12.500" stroke="#fff" stroke-width="1.400"></path></svg>
<div class="bx" style="left:40.500px;top:711px;width:4px;height:11px;background:#4f86e8"></div>
<div class="bx" style="left:46.500px;top:711px;width:4px;height:11px;background:#4f86e8"></div>
<div class="bx" style="left:61.500px;top:711.500px;width:10px;height:10px;background:#e0281e"></div>
<svg style="left:83px;top:711px" width="9" height="11" viewBox="0 0 9 11"><path d="M.5.500L8.500 5.500.5 10.500z" fill="#9a9a9a"></path></svg>
<div class="t" style="left: 98.5px; top: 711.4px; font-size: 11.6px; color: rgb(255, 255, 255); letter-spacing: -0.17px;">0:00:00</div>
<div class="bx" style="left:145px;top:711px;width:10px;height:11px;background:#b9a3e8;border:1px solid #8f6fd0"></div>
<svg style="left:147px;top:714.500px" width="6" height="4" viewBox="0 0 6 4"><path d="M0 0H6L3 3.500z" fill="#3d2a6e"></path></svg>
<!-- right side -->
<svg style="left:965px;top:710px" width="16" height="14" viewBox="0 0 16 14"><path d="M3.500 2.500H9.500L12.500 5.500V13.500H3.500z" fill="none" stroke="#444" stroke-width="1.100"></path><path d="M9.500 2.500V5.500H12.500" fill="none" stroke="#444" stroke-width="1"></path><path d="M.500 3.500V.500H3.500M12.500.500H15.500V3.500" fill="none" stroke="#444" stroke-width="1"></path></svg>
<div class="t" style="left: 983px; top: 711.4px; font-size: 11.6px; letter-spacing: -0.1px;">Concentração</div>
<svg style="left:1079px;top:710px" width="14" height="13" viewBox="0 0 14 13"><path d="M7 1.500V12M.600 1h5C6.400 1 7 1.500 7 2.200 7 1.500 7.600 1 8.400 1h5V11.500h-5C7.600 11.500 7 12 7 12.500 7 12 6.400 11.500 5.600 11.500h-5z" fill="none" stroke="#444" stroke-width="1.100"></path><path d="M2.200 3.500H5M2.200 5.500H5M2.200 7.500H5M9 3.500H11.800M9 5.500H11.800M9 7.500H11.800" stroke="#444" stroke-width=".9"></path></svg>
<div class="bx" style="left:1107px;top:706px;width:38px;height:22px;background:#c8c8c8"></div>
<svg style="left:1119px;top:710px" width="13" height="14" viewBox="0 0 13 14"><rect x=".600" y=".600" width="11.800" height="12.800" fill="none" stroke="#333" stroke-width="1.200"></rect><path d="M3 3.500H10M3 5.800H10M3 8.100H10M3 10.400H10" stroke="#333" stroke-width="1.100"></path></svg>
<svg style="left:1159px;top:710px" width="16" height="15" viewBox="0 0 16 15"><rect x=".600" y=".600" width="11.800" height="11.800" fill="none" stroke="#444" stroke-width="1.100"></rect><path d="M2.500 3.200H10.500M2.500 5.500H10.500M2.500 7.800H7" stroke="#444" stroke-width="1"></path><circle cx="11.500" cy="10.500" r="3.800" fill="#f3f3f3" stroke="#444" stroke-width="1"></circle><path d="M7.700 10.500H15.300M11.500 6.700c-2 2.300-2 5.300 0 7.600c2-2.300 2-5.300 0-7.600" fill="none" stroke="#444" stroke-width=".8"></path></svg>
<div class="bx" style="left:1192px;top:716px;width:8px;height:1px;background:#444"></div>
<div class="bx" style="left:1203px;top:716px;width:104px;height:1px;background:#b0b0b0"></div>
<div class="bx" style="left:1253px;top:711px;width:5px;height:11px;background:#6a6a6a"></div>
<div class="bx" style="left:1309px;top:716px;width:9px;height:1px;background:#444"></div>
<div class="bx" style="left:1313px;top:712px;width:1px;height:9px;background:#444"></div>
<div class="t" style="left: 1332px; top: 711.4px; font-size: 11.6px; letter-spacing: -0.91px;">100%</div>

<!-- ================= TASKBAR ================= -->
<div id="taskbar">
  <div id="start"></div>
  <svg style="left:16px;top:12px" width="16" height="16" viewBox="0 0 17 17"><path d="M0 2.300L7 1.300V8H0zM8 1.200L17 0V8H8zM0 9H7V15.700L0 14.700zM8 9H17V17L8 15.800z" fill="#fff"></path></svg>
  <div id="tsearch"></div>
  <svg style="left:60px;top:12px" width="17" height="17" viewBox="0 0 17 17"><circle cx="10.500" cy="6.300" r="5.200" fill="none" stroke="#333" stroke-width="1.400"></circle><path d="M6.800 10.200L.8 16.200" stroke="#333" stroke-width="1.600"></path></svg>
  <div class="t" style="left: 88.5px; top: 12.5px; font-size: 15.5px; color: rgb(58, 58, 58); letter-spacing: -0.46px;">Escreva aqui para procurar</div>
  <!-- task view -->
  <svg style="left:407.500px;top:11.500px" width="16" height="15.500" viewBox="0 0 18 18" preserveAspectRatio="none"><g fill="none" stroke="#fff" stroke-width="1.300"><rect x="1" y="5" width="11" height="8.500"></rect><path d="M1 2.800V1H12V2.800M1 15.700V17.500H12V15.700"></path></g><path d="M15.500 1V17.500" stroke="#fff" stroke-width="1.300"></path><rect x="14.300" y="5.500" width="2.600" height="2.600" fill="#fff"></rect></svg>
  <!-- explorer -->
  <svg style="left:451px;top:10px" width="23" height="20" viewBox="0 0 23 20"><path d="M.5 1.500H8L10 3.500H22V18.500H.5z" fill="#e8a93a"></path><path d="M.5 5H22.500V18.500H.500z" fill="#fcd462"></path><path d="M.5 5H22.500V7H.5z" fill="#ffe08a"></path><path d="M5 12H18V18.500H5z" fill="#3f8fd8"></path><path d="M8 15H15V18.500H8z" fill="#fcd462"></path></svg>
  <div class="ul" style="left:447px;width:33px"></div><div class="ul" style="left:474px;width:6px;background:#8fa6cf"></div>
  <!-- outlook -->
  <svg style="left:491px;top:8px" width="26" height="24" viewBox="0 0 26 24"><path d="M9 1H24C25 1 25.500 1.500 25.500 2.500V20C25.500 21 25 21.500 24 21.500H9z" fill="#1469c4"></path><path d="M13 2H19V8H13z" fill="#2a8ce0"></path><path d="M19 2H25V8H19z" fill="#4fb2f5"></path><path d="M13 8H19V14H13z" fill="#1e78d2"></path><path d="M19 8H25V14H19z" fill="#33a0ee"></path><path d="M9 14L17.500 19 25.500 14V20.500C25.500 21 25 21.500 24 21.500H9z" fill="#2f9bec"></path><rect x="0" y="5" width="13" height="14" rx="1.200" fill="#0f5fb8"></rect><circle cx="6.500" cy="12" r="3.300" fill="none" stroke="#fff" stroke-width="1.800"></circle></svg>
  <!-- edge legacy -->
  <svg style="left:537px;top:9px" width="21" height="22" viewBox="0 0 21 22"><path d="M1 10.500C1.500 4.500 5.500 1 11 1c5.500 0 9.500 3.800 9.500 9.500v2.300H7.500c.3 3 2.500 4.500 5.500 4.500 2.300 0 4.300-.6 6.200-1.700v4.300C17.300 21 15 21.500 12.300 21.500 6.500 21.500 2.800 18 2.800 12.800c0-3 1.300-5.600 3.700-7.200C4 6.300 2 8 1 10.500zM7.600 9.200h7.200C14.700 6.800 13.300 5.300 11.200 5.300S7.900 6.900 7.600 9.200z" fill="#1f7bd8"></path></svg>
  <!-- chrome -->
  <svg style="left:577px;top:8px" width="24" height="24" viewBox="0 0 24 24"><path d="M12 12L2.040 6.250A11.500 11.500 0 0 1 21.960 6.250z" fill="#e24a3a"></path><path d="M12 12L21.960 6.250A11.500 11.500 0 0 1 12 23.500z" fill="#fbc832"></path><path d="M12 12L12 23.500A11.500 11.500 0 0 1 2.040 6.250z" fill="#2fa354"></path><path d="M12 6.700H22.200A11.500 11.500 0 0 0 1.800 6.700z" fill="#e24a3a"></path><path d="M7.400 14.650L2.300 5.820A11.500 11.500 0 0 0 11 23.450L16 15z" fill="#2fa354"></path><circle cx="12" cy="12" r="5.300" fill="#f4f4f4"></circle><circle cx="12" cy="12" r="4.200" fill="#4b8df0"></circle></svg>
  <div class="ul" style="left:573px;width:33px"></div>
  <!-- word -->
  <svg style="left:619px;top:9px" width="25" height="22" viewBox="0 0 25 22"><path d="M8 .500H23.500C24.300 .500 24.800 1 24.800 1.800V20.200C24.800 21 24.300 21.500 23.500 21.500H8z" fill="#2b7cd3"></path><path d="M8 .500H24.800V6H8z" fill="#41a5ee"></path><path d="M8 11.500H24.800V16.500H8z" fill="#185abd"></path><path d="M8 16.500H24.800V20.200C24.800 21 24.300 21.500 23.500 21.500H8z" fill="#103f91"></path><rect x="0" y="4.500" width="13" height="13" rx="1.200" fill="#185abd"></rect><path d="M2.500 7.500L4.300 14.500 6.500 8.500 8.700 14.500 10.500 7.500" fill="none" stroke="#fff" stroke-width="1.500" stroke-linejoin="round"></path></svg>
  <div class="ul" style="left:615px;width:33px"></div><div class="ul" style="left:642px;width:6px;background:#8fa6cf"></div>
  <!-- excel -->
  <svg style="left:660px;top:9px" width="25" height="22" viewBox="0 0 25 22"><path d="M8 .500H23.500C24.300 .500 24.800 1 24.800 1.800V20.200C24.800 21 24.300 21.500 23.500 21.500H8z" fill="#21a366"></path><path d="M16.500 .500H23.500C24.300 .500 24.800 1 24.800 1.800V6H16.500z" fill="#33c481"></path><path d="M8 6H16.500V11.500H8z" fill="#107c41"></path><path d="M16.500 11.500H24.800V16.500H16.500z" fill="#107c41"></path><path d="M8 16.500H24.800V20.200C24.800 21 24.300 21.500 23.500 21.500H8z" fill="#185c37"></path><rect x="0" y="4.500" width="13" height="13" rx="1.200" fill="#107c41"></rect><path d="M3.800 7.800L9.200 14.300M9.200 7.800L3.800 14.300" stroke="#fff" stroke-width="1.700"></path></svg>
  <!-- IE -->
  <svg style="left:703px;top:8px" width="26" height="24" viewBox="0 0 26 24"><path d="M4 12.500C4.500 7 8.500 3.500 13.500 3.500c5.300 0 9 3.700 9 9v1.800H9.500c.3 2.700 2.300 4 4.800 4 2 0 3.600-.6 4.600-2h3.600C21 20.300 18 22.500 14 22.500 8 22.500 4 18.500 4 12.500zM9.600 11h8.200C17.600 8.800 16 7.300 13.700 7.300S9.900 8.800 9.600 11z" fill="#2fb3ea"></path><path d="M24.500 4C23 1 17 2.500 10 8.500 4 13.800 1 19.500 2.500 22c1.200 2 5 1 8-1" fill="none" stroke="#f4c430" stroke-width="1.800"></path></svg>
  <!-- monitor app -->
  <svg style="left:745px;top:9px" width="23" height="23" viewBox="0 0 23 23"><path d="M1 3.500L21 .800 22 14.500 2.500 17z" fill="#dfe6ea" stroke="#9aa3a8" stroke-width="1"></path><path d="M3.500 11L7 8l2.500 3.500L13 6l3 5 3.500-3" fill="none" stroke="#4a9bd8" stroke-width="1.200"></path><path d="M3 13.500H20" stroke="#8ab" stroke-width=".8"></path><path d="M8.500 17L8 20.500C10 22.500 14 22.500 16 20.500L15 16z" fill="#c5ccd0"></path><ellipse cx="12" cy="21" rx="5" ry="1.600" fill="#aeb6bb"></ellipse></svg>
  <!-- zoom -->
  <svg style="left:788px;top:8px" width="24" height="24" viewBox="0 0 24 24"><rect x=".500" y=".500" width="23" height="23" rx="6" fill="#4a8cf7"></rect><rect x="4.500" y="8" width="10" height="8" rx="1.800" fill="#fff"></rect><path d="M15.500 11L19.500 8.500V15.500L15.500 13z" fill="#fff"></path></svg>
  <!-- recorder 1 -->
  <svg style="left:828px;top:8px" width="26" height="26" viewBox="0 0 26 26"><rect x="1" y="1" width="22" height="17" rx="1.500" fill="#7a2a7d" stroke="#f0e6f2" stroke-width="1.500"></rect><path d="M6 7.500H13.500V13.500H6zM14 10l4-2.500V13.500L14 11z" fill="#fff"></path><circle cx="7.800" cy="6.300" r="1.700" fill="#fff"></circle><circle cx="11.800" cy="6.300" r="1.700" fill="#fff"></circle><path d="M12 18.500V21.500M6 22H18" stroke="#e8dcea" stroke-width="1.600"></path><circle cx="20" cy="20" r="4.200" fill="#f0323c"></circle></svg>
  <!-- recorder 2 -->
  <svg style="left:869px;top:8px" width="26" height="26" viewBox="0 0 26 26"><rect x="1" y="1" width="22" height="17" rx="1.500" fill="#7a2a7d" stroke="#f0e6f2" stroke-width="1.500"></rect><path d="M6 7.500H13.500V13.500H6zM14 10l4-2.500V13.500L14 11z" fill="#fff"></path><circle cx="7.800" cy="6.300" r="1.700" fill="#fff"></circle><circle cx="11.800" cy="6.300" r="1.700" fill="#fff"></circle><path d="M12 18.500V21.500M6 22H16" stroke="#e8dcea" stroke-width="1.600"></path><path d="M16 15.500L24.500 20 16 24.500z" fill="#2ecc40"></path></svg>
  <!-- dropbox -->
  <svg style="left:910px;top:8px" width="24" height="24" viewBox="0 0 24 24"><rect width="24" height="24" rx="3" fill="#fff"></rect><g fill="#1f63e6"><path d="M7.500 4.500L3.500 7 7.500 9.500 11.500 7zM16.500 4.500L12.500 7 16.500 9.500 20.500 7zM3.500 12L7.500 14.500 11.500 12 7.500 9.500zM16.500 9.500L12.500 12 16.500 14.500 20.500 12zM7.600 15.600L12 18.300 16.400 15.600 12 13z"></path></g></svg>
  <!-- settings -->
  <svg style="left:953px;top:10px" width="20" height="20" viewBox="0 0 20 20"><g transform="translate(10 10)"><g fill="#fff"><rect x="-2" y="-10" width="4" height="20" rx=".800"></rect><rect x="-2" y="-10" width="4" height="20" rx=".800" transform="rotate(45)"></rect><rect x="-2" y="-10" width="4" height="20" rx=".800" transform="rotate(90)"></rect><rect x="-2" y="-10" width="4" height="20" rx=".800" transform="rotate(135)"></rect></g><circle r="7.200" fill="#fff"></circle><circle r="4.300" fill="#3c3e44"></circle><circle r="4.300" fill="none" stroke="#fff" stroke-width="0"></circle></g></svg>
  <div class="ul" style="left:947px;width:33px"></div>
  <!-- skype -->
  <svg style="left:992px;top:8px" width="24" height="24" viewBox="0 0 24 24"><circle cx="7" cy="7" r="6.500" fill="#18a6e4"></circle><circle cx="17" cy="17" r="6.500" fill="#18a6e4"></circle><circle cx="12" cy="12" r="10" fill="#18a6e4"></circle><path d="M15.800 8.800C15 7.300 13.700 6.700 12 6.700 9.800 6.700 8.300 7.800 8.300 9.500c0 1.700 1.500 2.200 3.700 2.700 2.300.5 3.800 1 3.800 2.700 0 1.700-1.600 2.700-3.800 2.700-2 0-3.500-.8-4.200-2.500" fill="none" stroke="#fff" stroke-width="2.300" stroke-linecap="round"></path></svg>
  <!-- powerpoint -->
  <svg style="left:1032px;top:8px" width="26" height="24" viewBox="0 0 26 24"><circle cx="14.500" cy="12" r="11" fill="#ed6c47"></circle><path d="M14.500 1A11 11 0 0 1 25.500 12H14.500z" fill="#ff8f6b"></path><path d="M3.500 12H25.500A11 11 0 0 1 3.500 12z" fill="#d35230"></path><rect x="0" y="5.500" width="13" height="13" rx="1.200" fill="#c43e1c"></rect><path d="M4.500 15.500V8.500H7C8.700 8.500 9.600 9.400 9.600 10.700S8.700 13 7 13H4.500" fill="none" stroke="#fff" stroke-width="1.600"></path></svg>
  <!-- foxit-like orange PDF -->
  <svg style="left:1074px;top:8px" width="24" height="25" viewBox="0 0 24 25"><path d="M0 0H18L24 6V25H0z" fill="#f08a24"></path><path d="M18 0V6H24z" fill="#ffd9a8"></path><path d="M15.500 8.500C14.300 6.800 12.500 6 10.500 6.300 7.500 6.800 5.800 9.500 6.300 12.300c.5 2.600 3 4.300 5.700 3.800 2-.4 3.400-1.800 3.800-3.600H11.200" fill="none" stroke="#fff" stroke-width="2.200"></path><text x="12" y="22.500" font-family="Liberation Sans" font-size="6" font-weight="bold" fill="#ffe9cf" text-anchor="middle">PDF</text></svg>
  <div class="ul" style="left:1070px;width:33px"></div>
  <!-- help ? -->
  <svg style="left:1119.800px;top:9.800px" width="24" height="22" viewBox="0 0 24 22"><circle cx="10.500" cy="10.500" r="9.700" fill="#1e8fd0" stroke="#fff" stroke-width="1.600"></circle><path d="M7 8C7 5.800 8.500 4.700 10.500 4.700S14 5.900 14 7.700c0 2.600-3.300 2.800-3.300 5.500" fill="none" stroke="#fff" stroke-width="2.300"></path><circle cx="10.700" cy="16.300" r="1.500" fill="#fff"></circle><circle cx="19" cy="17" r="4.500" fill="#e5202e"></circle><rect x="18.300" y="13.800" width="1.500" height="4" fill="#fff"></rect><rect x="18.300" y="18.700" width="1.500" height="1.500" fill="#fff"></rect></svg>
  <!-- chevron -->
  <svg style="left:1153px;top:16px" width="13" height="8" viewBox="0 0 13 8"><path d="M.8 7L6.500 1.300 12.200 7" fill="none" stroke="#fff" stroke-width="1.400"></path></svg>
  <!-- wifi -->
  <svg style="left:1177px;top:14px" width="16" height="15" viewBox="0 0 16 15"><g fill="none" stroke="#fff" stroke-width="1.300"><path d="M1.200 13.500A12.500 12.500 0 0 1 13.700 1"></path><path d="M5 13.500A8.700 8.700 0 0 1 13.700 4.800"></path><path d="M8.800 13.500A5 5 0 0 1 13.700 8.600"></path></g><rect x="11.500" y="11.500" width="2.500" height="2.500" fill="#fff"></rect></svg>
  <!-- battery -->
  <svg style="left:1198.500px;top:14px" width="17.500" height="12" viewBox="0 0 19 13"><rect x="4.500" y="3.500" width="12" height="7.500" fill="none" stroke="#fff" stroke-width="1.300"></rect><rect x="6.300" y="5.300" width="8.400" height="3.900" fill="#fff"></rect><rect x="17" y="5.500" width="1.500" height="3.500" fill="#fff"></rect><path d="M2.500 0V3M5 0V3" stroke="#fff" stroke-width="1.100"></path><path d="M1 3H6.500V5.500C6.500 7 5.300 7.800 3.800 7.800S1 7 1 5.500z" fill="#fff" stroke="#3c3e44" stroke-width=".800"></path><path d="M3.800 7.800V11.500" stroke="#fff" stroke-width="1.100"></path></svg>
  <!-- volume -->
  <svg style="left:1223px;top:13px" width="17" height="15" viewBox="0 0 17 15"><path d="M.800 5H3.500L7 1.500V13.500L3.500 10H.800z" fill="none" stroke="#fff" stroke-width="1.200" stroke-linejoin="round"></path><path d="M9.300 5C10.300 6.500 10.300 8.500 9.300 10M11.500 3C13.300 5.500 13.300 9.500 11.500 12M13.800 1C16.500 4.500 16.500 10.500 13.800 14" fill="none" stroke="#fff" stroke-width="1.100"></path></svg>
  <div class="t" style="left: 1265px; top: 5px; font-size: 12px; color: rgb(255, 255, 255); letter-spacing: -0.81px;">17:58</div>
  <div class="t" style="left: 1250px; top: 23px; font-size: 12px; color: rgb(255, 255, 255); letter-spacing: -0.31px;">10/06/2020</div>
  <!-- notifications -->
  <svg style="left:1324px;top:12px" width="28" height="25" viewBox="0 0 28 25"><path d="M1 .500H17.500V13H6L3.500 15.500V13H1z" fill="#fff"></path><path d="M4 4H14.500M4 6.800H14.500M4 9.600H14.500" stroke="#3c3e44" stroke-width="1.100"></path><circle cx="16.500" cy="15.500" r="9.200" fill="#3c3e44" stroke="#9a9a9a" stroke-width="1"></circle><text x="16.500" y="19.500" font-family="Liberation Sans" font-size="11" fill="#fff" text-anchor="middle">24</text></svg>
</div>


</body></html>
